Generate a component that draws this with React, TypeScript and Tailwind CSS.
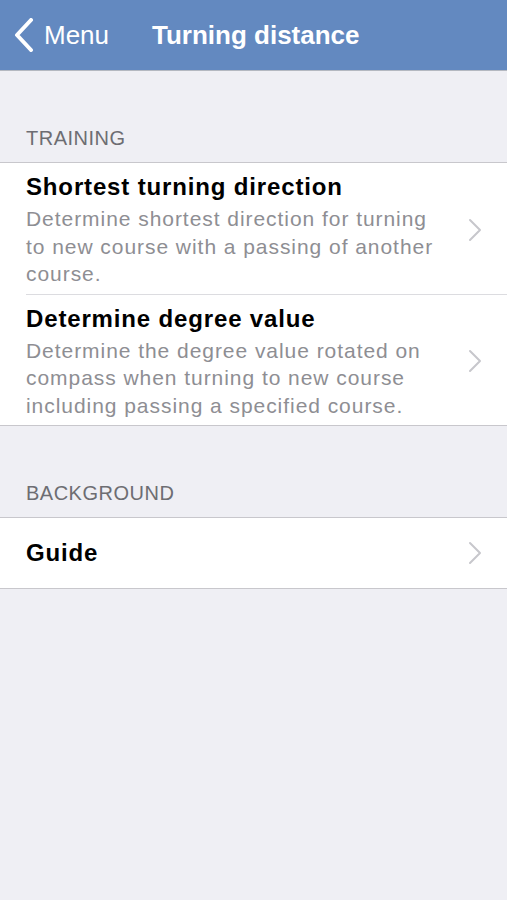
type Item = { title: string; desc?: string };

const training: Item[] = [
  {
    title: 'Shortest turning direction',
    desc: 'Determine shortest direction for turning to new course with a passing of another course.',
  },
  {
    title: 'Determine degree value',
    desc: 'Determine the degree value rotated on compass when turning to new course including passing a specified course.',
  },
];

function Chevron() {
  return (
    <svg width="14" height="24" viewBox="0 0 14 24" className="shrink-0">
      <path d="M2 2 L12 12 L2 22" fill="none" stroke="#c7c7cc" strokeWidth="2" strokeLinecap="round" strokeLinejoin="round" />
    </svg>
  );
}

function Row({ item, last }: { item: Item; last: boolean }) {
  return (
    <div className="pl-[26px] bg-white">
      <div
        className={`flex items-center pr-[25px] ${item.desc ? 'pt-[9px] pb-[6px]' : 'h-[70px]'} ${
          last ? '' : 'border-b border-[#dcdce0]'
        }`}
      >
        <div className="flex-1 pr-[28px]">
          <div className="text-[24px] leading-[30px] font-semibold text-black tracking-[0.85px]">{item.title}</div>
          {item.desc && (
            <div className="text-[21px] leading-[27.5px] text-[#8e8e93] mt-[3px] tracking-[0.95px]">{item.desc}</div>
          )}
        </div>
        <Chevron />
      </div>
    </div>
  );
}

function Section({ label, items }: { label: string; items: Item[] }) {
  return (
    <div>
      <div className="pl-[26px] pt-[56px] pb-[13px] text-[20px] leading-[22px] text-[#6d6d72] tracking-[0.5px]">
        {label}
      </div>
      <div className="border-y border-[#c8c7cc]">
        {items.map((it, i) => (
          <Row key={it.title} item={it} last={i === items.length - 1} />
        ))}
      </div>
    </div>
  );
}

export default function App() {
  return (
    <div
      className="w-[507px] h-[900px] bg-[#efeff4] overflow-hidden"
      style={{ fontFamily: '"Liberation Sans", Arial, sans-serif' }}
    >
      <header className="h-[71px] bg-[#6389c0] border-b border-[#b4b8c0] flex items-center text-white">
        <div className="flex items-center pl-[12px] w-[152px]">
          <svg width="24" height="34" viewBox="0 0 24 34" className="mr-[8px]">
            <path d="M19 2 L5 17 L19 32" fill="none" stroke="white" strokeWidth="4" strokeLinecap="round" strokeLinejoin="round" />
          </svg>
          <span className="text-[26px] leading-[30px]">Menu</span>
        </div>
        <span className="text-[26px] leading-[30px] font-semibold">Turning distance</span>
      </header>
      <Section label="TRAINING" items={training} />
      <Section label="BACKGROUND" items={[{ title: 'Guide' }]} />
    </div>
  );
}
